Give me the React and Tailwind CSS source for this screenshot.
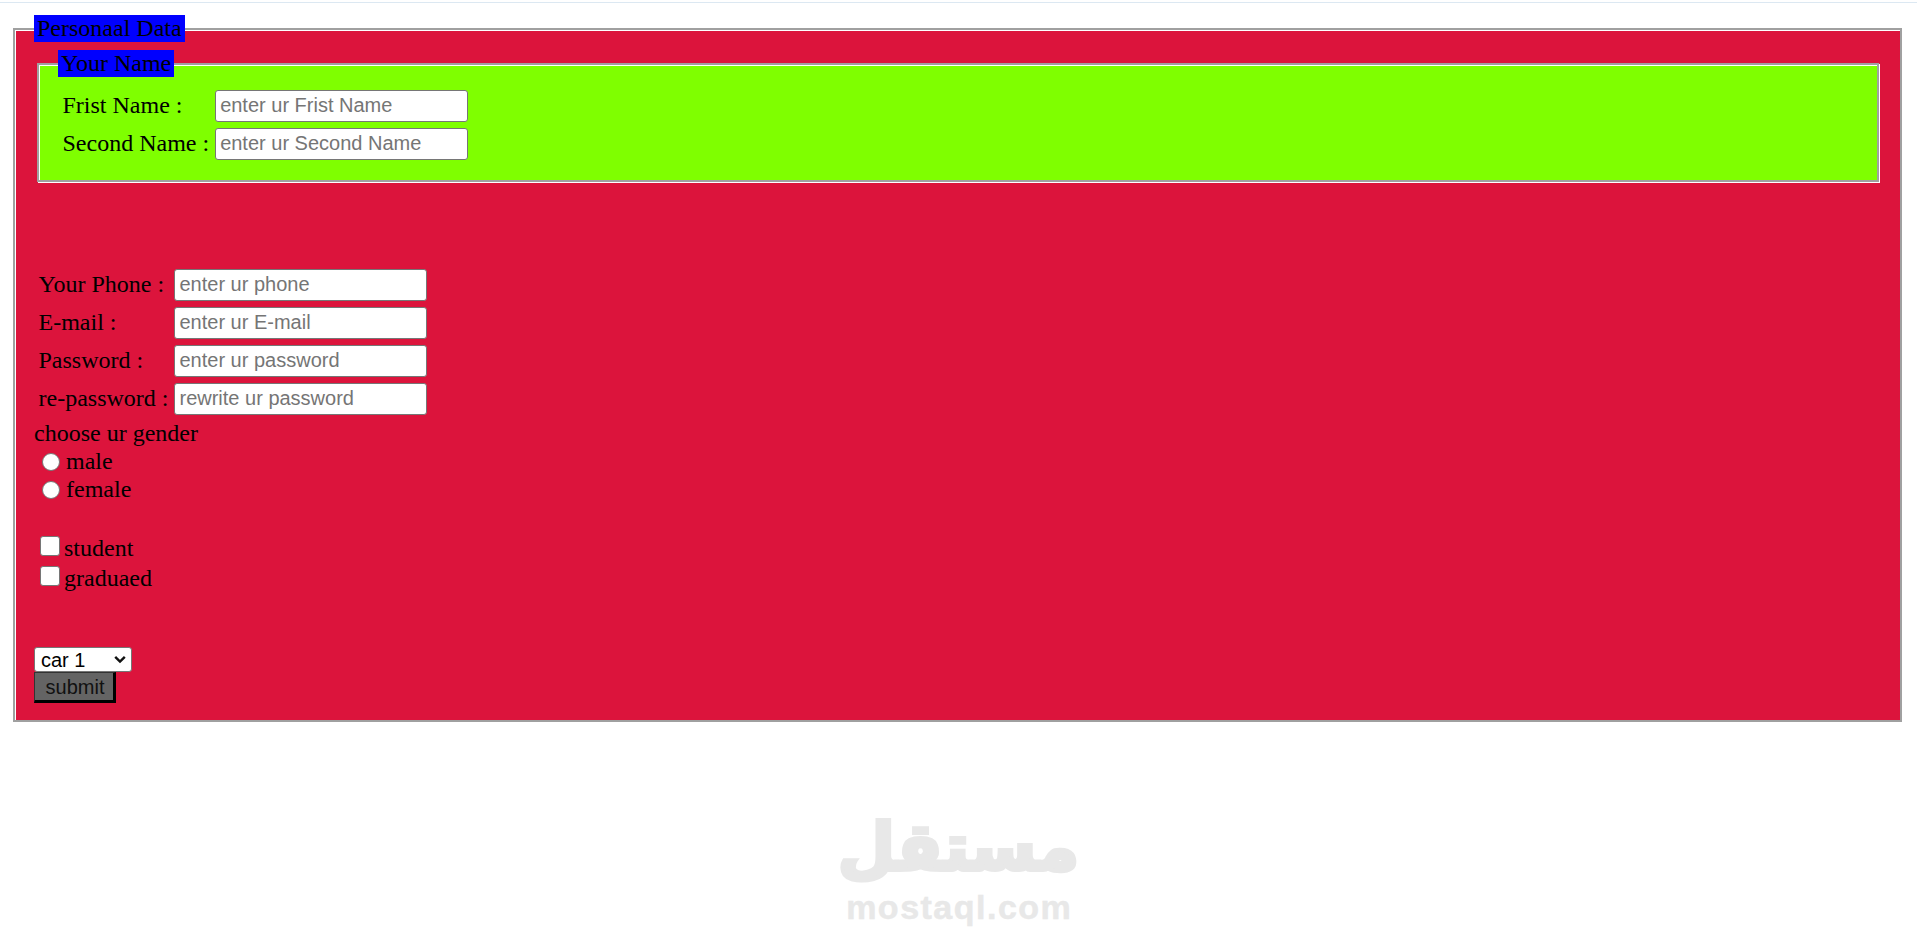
export default function App() {
  const inputCls =
    "box-border block w-[253px] h-[32px] bg-white border border-[#767676] rounded-[3px] px-[4px] text-[20px] text-black placeholder:text-[#757575] font-['Liberation_Sans',Arial,sans-serif] outline-none";
  const groove =
    "border-2 border-solid border-[#a0a0a0] shadow-[inset_1px_1px_0_#ffffff,1px_1px_0_#ffffff]";
  const radioCls =
    "appearance-none shrink-0 w-[18px] h-[18px] rounded-full bg-white border-[1.5px] border-solid border-[#767676] ml-[8px] mr-[6px] mt-[1px]";
  const checkCls =
    "appearance-none shrink-0 w-[19.5px] h-[19.5px] rounded-[3px] bg-white border-[1.5px] border-solid border-[#767676] ml-[6px] mr-[4.5px]";
  return (
    <div className="relative w-[1917px] h-[947px] bg-white overflow-hidden font-['Liberation_Serif','Times_New_Roman',serif] text-[24px] text-black">
      <div className="h-[1px] mt-[2px] bg-[#dce8f2]" />
      <fieldset className={`mt-[12px] ml-[13px] mr-[15px] bg-[#dc143c] pl-[19px] pr-[18px] pt-[8px] pb-[17px] ${groove}`}>
        <legend className="bg-[#0000ff] px-[3px] leading-[27px]">Personaal Data</legend>

        <fieldset className={`mx-[3px] bg-[#7fff00] pl-[19px] pr-[19px] pt-[8px] pb-[16px] ${groove}`}>
          <legend className="bg-[#0000ff] px-[3px] leading-[27px]">Your Name</legend>
          <table className="border-separate border-spacing-[3px]">
            <tbody>
              <tr>
                <td className="p-[1.5px] leading-[27px] align-middle">Frist Name :</td>
                <td className="p-[1.5px] align-middle">
                  <input className={inputCls} placeholder="enter ur Frist Name" />
                </td>
              </tr>
              <tr>
                <td className="p-[1.5px] leading-[27px] align-middle">Second Name :</td>
                <td className="p-[1.5px] align-middle">
                  <input className={inputCls} placeholder="enter ur Second Name" />
                </td>
              </tr>
            </tbody>
          </table>
        </fieldset>

        <table className="mt-[82px] border-separate border-spacing-[3px]">
          <tbody>
            <tr>
              <td className="p-[1.5px] leading-[27px] align-middle">Your Phone :</td>
              <td className="p-[1.5px] align-middle">
                <input className={inputCls} placeholder="enter ur phone" />
              </td>
            </tr>
            <tr>
              <td className="p-[1.5px] leading-[27px] align-middle">E-mail :</td>
              <td className="p-[1.5px] align-middle">
                <input className={inputCls} placeholder="enter ur E-mail" />
              </td>
            </tr>
            <tr>
              <td className="p-[1.5px] leading-[27px] align-middle">Password :</td>
              <td className="p-[1.5px] align-middle">
                <input type="password" className={inputCls} placeholder="enter ur password" />
              </td>
            </tr>
            <tr>
              <td className="p-[1.5px] leading-[27px] align-middle">re-password :</td>
              <td className="p-[1.5px] align-middle">
                <input type="password" className={inputCls} placeholder="rewrite ur password" />
              </td>
            </tr>
          </tbody>
        </table>

        <div className="h-[28px] leading-[28px]">choose ur gender</div>
        <label className="flex items-center h-[28px]">
          <input type="radio" name="gender" className={radioCls} />
          <span className="leading-[27px]">male</span>
        </label>
        <label className="flex items-center h-[28px]">
          <input type="radio" name="gender" className={radioCls} />
          <span className="leading-[27px]">female</span>
        </label>
        <div className="h-[28px]" />
        <label className="flex items-center h-[30px]">
          <input type="checkbox" className={checkCls} />
          <span className="leading-[27px] pt-[5px]">student</span>
        </label>
        <label className="flex items-center h-[30px]">
          <input type="checkbox" className={checkCls} />
          <span className="leading-[27px] pt-[5px]">graduaed</span>
        </label>
        <div className="h-[56px]" />

        <div className="relative w-[98px] h-[25px]">
          <select className="appearance-none block w-full h-full bg-white border border-[#767676] rounded-[3px] pl-[6px] text-[20px] leading-none text-black font-['Liberation_Sans',Arial,sans-serif] outline-none">
            <option>car 1</option>
            <option>car 2</option>
            <option>car 3</option>
          </select>
          <svg
            className="absolute right-[6px] top-[8px] pointer-events-none"
            width="12"
            height="9"
            viewBox="0 0 12 9"
          >
            <path d="M1.2 1.8 L6 6.6 L10.8 1.8" fill="none" stroke="#111" strokeWidth="2.4" />
          </svg>
        </div>
        <button className="block h-[31px] w-[82px] bg-[#646464] text-[20px] leading-none text-[#111] font-['Liberation_Sans',Arial,sans-serif] pl-[2px] border-t-[1.5px] border-l-[1.5px] border-r-[3px] border-b-[3px] border-t-[#333333] border-l-[#333333] border-r-black border-b-black">
          submit
        </button>
      </fieldset>

      <div className="absolute left-0 right-0 top-[810px] flex flex-col items-center text-[#e8e8e8] pointer-events-none select-none">
        <div
          dir="rtl"
          className="font-['DejaVu_Sans',sans-serif] font-bold text-[66px] leading-[76px] [-webkit-text-stroke:4px_#e8e8e8]"
        >
          مستقل
        </div>
        <div className="mt-[4px] font-['Liberation_Sans',Arial,sans-serif] font-bold text-[34px] leading-[34px] tracking-[1.5px] mr-[-1.5px] [-webkit-text-stroke:0.5px_#e8e8e8]">
          mostaql.com
        </div>
      </div>
    </div>
  );
}
